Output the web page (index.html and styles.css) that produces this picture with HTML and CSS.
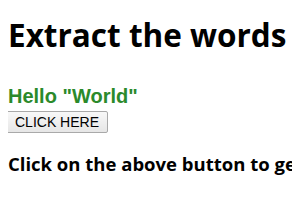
FILE: index.html
```html
<!DOCTYPE html>
<html>
<head>
<meta charset="utf-8">
<link rel="stylesheet" href="styles.css">
</head>
<body>
<h1 class="title">Extract the words inside quotes</h1>
<p class="sample">Hello "World"</p>
<button class="btn">CLICK HERE</button>
<h3 class="result">Click on the above button to get the words</h3>
</body>
</html>
```
FILE: styles.css
```css
html {
  overflow: hidden;
}
body {
  margin: 8px;
  font-family: "Open Sans", "Noto Sans", sans-serif;
  white-space: nowrap;
}
.title {
  font-size: 31.5px;
  font-weight: 700;
  margin: 5px 0 0;
  color: #000;
}
.sample {
  font-family: "Liberation Sans", Arial, sans-serif;
  font-weight: 700;
  color: #2b8a2b;
  font-size: 20px;
  margin: 27px 0 0;
  line-height: 26px;
}
.btn {
  display: block;
  font-family: "Liberation Sans", Arial, sans-serif;
  font-size: 14px;
  margin: 2px 0 0 -2px;
  padding: 2px 8px;
  background: linear-gradient(#f8f8f8, #e6e6e6);
  border: 1px solid #a9a9a9;
  border-radius: 2px;
  color: #000;
}
.result {
  font-size: 18.5px;
  font-weight: 700;
  margin: 18px 0 0;
}
```
